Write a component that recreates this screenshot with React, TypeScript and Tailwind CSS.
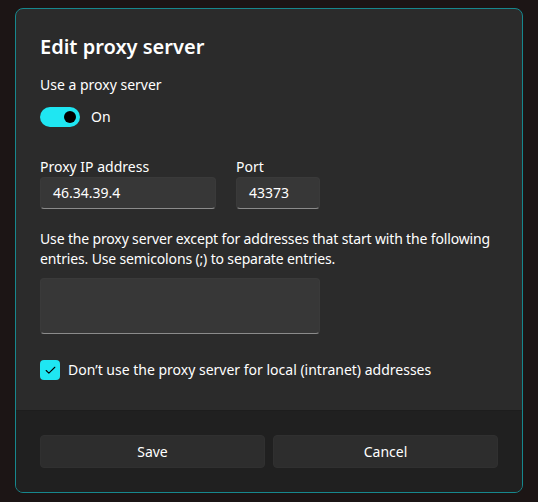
import { Check } from "lucide-react";

const font = { fontFamily: '"Segoe UI", "Noto Sans", "Open Sans", sans-serif' };

const TextBox = ({ value, className }: { value?: string; className: string }) => (
  <div
    className={`rounded-[4px] border border-[#3a3a3a] border-b-[#8b8b8b] bg-[#373737] px-3 text-[14px] text-white ${className}`}
  >
    {value}
  </div>
);

export default function App() {
  return (
    <div className="h-[502px] w-[538px] bg-[#1c1515] pt-[8px] pl-[15px]" style={font}>
      <div className="flex h-[485px] w-[508px] flex-col overflow-hidden rounded-[8px] border border-[#17878d] bg-[#2b2b2b]">
        <div className="flex flex-1 flex-col px-[24px] pt-[24px]">
          <h1 className="text-[20px] font-semibold leading-[28px] text-white">Edit proxy server</h1>
          <p className="mt-[14px] text-[14px] leading-[20px] text-white">Use a proxy server</p>

          <div className="mt-[12px] flex items-center gap-[11px]">
            <div className="flex h-[20px] w-[40px] items-center justify-end rounded-full bg-[#1fe6f2] pr-[4px]">
              <div className="h-[12px] w-[12px] rounded-full bg-black" />
            </div>
            <span className="text-[14px] leading-[20px] text-white">On</span>
          </div>

          <div className="mt-[30px] flex gap-[20px]">
            <div className="flex flex-col">
              <span className="text-[14px] leading-[20px] text-white">Proxy IP address</span>
              <TextBox value="46.34.39.4" className="h-[32px] w-[176px] leading-[30px]" />
            </div>
            <div className="flex flex-col">
              <span className="text-[14px] leading-[20px] text-white">Port</span>
              <TextBox value="43373" className="h-[32px] w-[84px] leading-[30px]" />
            </div>
          </div>

          <p className="mt-[20px] whitespace-nowrap text-[14px] leading-[20px] tracking-[-0.15px] text-white">
            Use the proxy server except for addresses that start with the following
            <br />
            entries. Use semicolons (;) to separate entries.
          </p>
          <TextBox className="mt-[9px] h-[56px] w-[280px]" />

          <div className="mt-[26px] flex items-center gap-[8px]">
            <div className="flex h-[20px] w-[20px] items-center justify-center rounded-[4px] bg-[#1fe6f2]">
              <Check className="h-[13px] w-[13px] text-black" strokeWidth={2} />
            </div>
            <span className="text-[14px] leading-[20px] text-white">
              Don’t use the proxy server for local (intranet) addresses
            </span>
          </div>
        </div>

        <div className="flex h-[82px] gap-[8px] border-t border-[#1d1d1d] bg-[#202020] px-[24px] pt-[24px]">
          <button className="h-[33px] flex-1 rounded-[4px] border border-[#303030] bg-[#2d2d2d] text-[14px] text-white">
            Save
          </button>
          <button className="h-[33px] flex-1 rounded-[4px] border border-[#303030] bg-[#2d2d2d] text-[14px] text-white">
            Cancel
          </button>
        </div>
      </div>
    </div>
  );
}
